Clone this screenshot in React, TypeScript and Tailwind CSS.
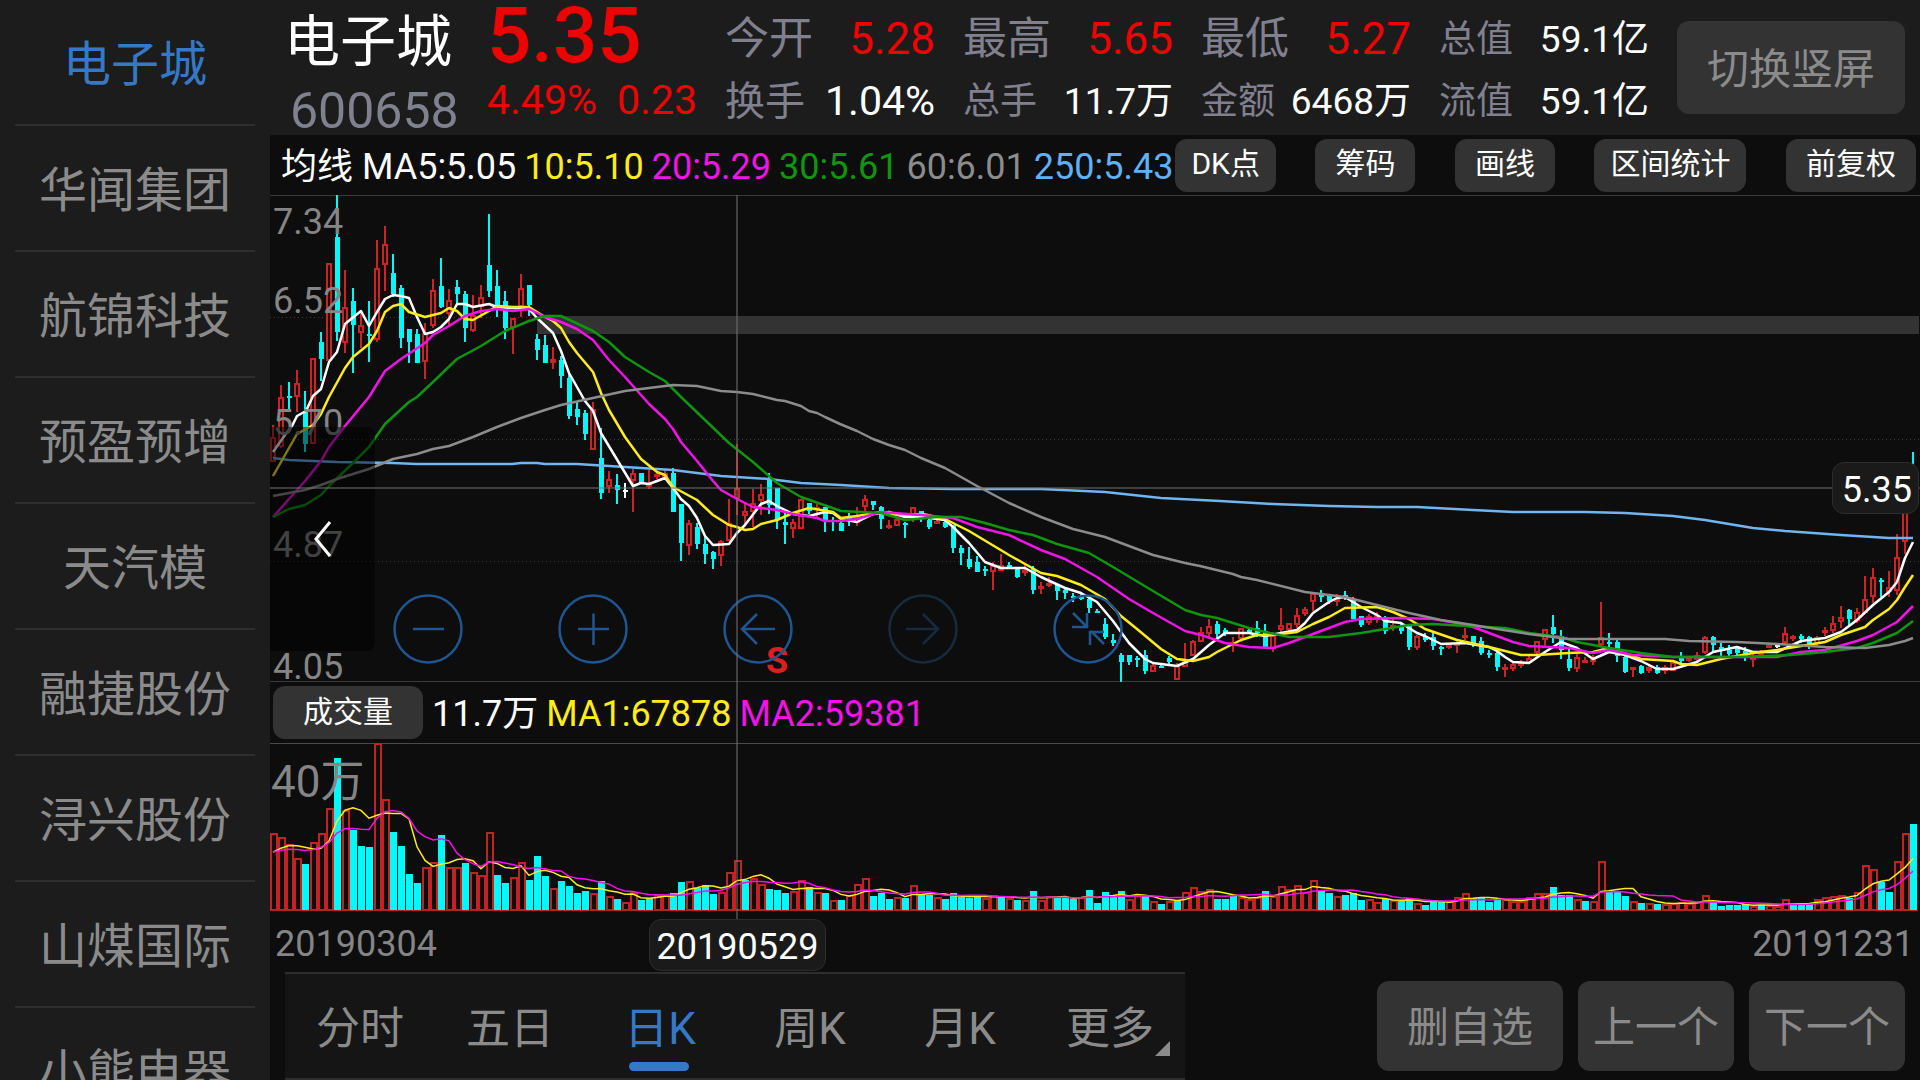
import type { ReactNode } from "react";

type Kind = "R" | "C" | "W";
interface Candle {
  kind: Kind;
  high: number;
  top: number;
  bottom: number;
  low: number;
}

/* One entry per trading day: kind (R rise, C fall, W flat), then high, body top, body bottom, low. */
const CANDLES: Candle[] = `
R425,437,462,462 R385,397,447,448 C382,396,397,410 R370,383,397,412 C391,412,444,452 R358,358,444,444
C332,342,359,381 R263,263,361,361 C195,237,332,341 R270,307,343,353 C288,301,325,373 R313,325,333,348
C301,334,336,362 R240,268,340,342 R226,244,265,291 C254,273,294,297 C285,288,338,348 C329,329,342,363
C329,334,363,363 R323,333,362,379 R279,290,326,328 C258,286,307,308 R289,300,314,327 C280,287,294,305
C291,294,328,342 R295,315,331,332 R285,297,307,318 C214,265,291,297 C270,286,305,317 C291,301,328,339
R318,318,328,354 R274,288,307,317 C285,285,305,316 C334,339,350,360 C335,345,363,363 R347,359,363,369
C356,360,376,388 C373,378,416,419 C402,409,417,425 C410,413,434,440 R402,409,450,450 C428,458,493,499
R471,479,487,493 C474,485,490,504 W483,490,491,498 R469,473,481,512 C473,473,483,483 R470,483,487,489
R473,474,477,479 R470,473,477,480 C468,473,512,512 C504,504,543,561 R520,523,546,555 C523,527,544,549
C537,544,554,564 C551,552,559,569 R540,541,556,566 R499,523,541,541 R444,488,499,515 R503,511,516,525
R489,503,512,527 R484,494,501,515 C473,479,505,514 C488,488,520,529 C513,522,525,544 R519,522,529,538
R499,499,529,529 C503,503,511,514 R504,507,510,518 C507,507,521,532 C517,520,521,531 C520,523,531,531
C513,517,519,526 R507,517,523,526 R495,499,507,513 C501,501,505,510 C506,507,519,529 R520,525,527,529
R517,519,526,526 C522,523,525,538 R507,507,519,522 C511,511,517,522 C518,520,527,529 R519,521,524,524
C521,522,527,528 C525,525,548,553 C545,548,553,565 C547,559,567,569 C556,562,572,572 C566,569,571,576
R562,565,572,590 R554,565,571,571 C562,565,566,568 C568,569,577,578 R563,570,572,576 C566,569,590,594
R582,586,588,594 R577,583,586,587 C585,585,591,600 C588,590,593,599 C593,596,597,602 C593,597,599,600
C597,599,608,613 C609,611,612,613 C618,624,637,639 C634,640,643,646 C653,655,662,682 C655,655,662,665
C656,658,659,667 C650,655,671,674 R663,665,672,672 C665,666,668,668 C656,658,662,665 R663,665,680,680
R643,660,667,667 R640,641,656,656 R627,632,642,642 R619,626,634,637 C621,624,634,638 C628,630,633,636
R637,642,646,652 R628,628,639,642 C629,630,633,634 C621,628,633,637 C624,631,647,647 R632,635,649,652
R608,625,630,633 R623,623,630,633 R608,615,625,628 R607,609,614,616 R592,593,602,611 C590,595,597,602
C595,596,601,604 R594,598,602,606 C591,595,598,600 C597,600,619,619 C616,616,625,627 R614,616,623,625
R612,615,618,623 C616,617,631,634 R617,625,628,631 C622,626,631,634 C626,626,647,650 R635,636,648,650
C633,636,640,642 C633,637,646,650 C646,647,649,655 R643,645,648,649 R641,643,645,653 R628,635,637,640
C636,636,644,647 C637,641,653,655 C650,653,655,658 C650,653,667,671 R664,667,668,677 R663,664,669,671
R660,663,666,668 R656,658,663,664 R641,641,653,655 R629,629,640,647 C615,627,634,643 C630,636,650,659
C647,659,668,671 R654,657,669,672 R657,660,662,663 R655,659,662,665 R602,637,645,647 C633,642,644,648
C640,642,656,662 C655,657,672,673 R667,667,669,677 C665,666,673,674 R666,667,671,673 C665,667,673,674
R665,667,671,674 R660,662,671,671 C652,656,661,663 R657,658,661,662 R652,655,660,663 R636,637,653,654
C636,637,645,652 C643,647,650,656 C645,650,654,656 C647,648,653,655 C647,651,657,661 R652,657,659,667
R650,652,655,657 R644,645,648,648 W643,645,647,648 R627,633,643,645 R635,636,639,641 C634,636,639,643
C636,637,647,649 R636,637,644,647 R627,630,633,636 R616,623,631,633 R606,617,622,628 C609,610,619,625
R608,612,621,623 R576,599,613,613 R568,577,597,603 C578,580,582,597 R571,587,592,597 R534,557,591,595
R500,500,542,554 C452,470,500,504`
  .trim()
  .split(/\s+/)
  .map((entry) => {
    const [high, top, bottom, low] = entry.slice(1).split(",").map(Number);
    return { kind: entry[0] as Kind, high, top, bottom, low };
  });

/* Volume bars: kind and the height of the bar. */
const VOLUMES = `
R77 R73 R66 R52 C46 R68 R77 R102 C152 R100 C80 C64 C63 R167 R111 C78 C64 C36 C27 R43 R48 C75 R43 R43 C47 R38
R35 R78 C35 C27 R33 R48 C30 C54 C34 R22 C29 C24 C17 C19 R17 C29 R14 C11 R8 R18 C10 C12 R15 R15 C17 C28 R29 C22
C25 C16 R18 R38 R50 C30 R32 R26 C21 C20 C17 R19 R30 C23 R18 C17 R10 C10 R15 R26 R32 C14 C17 C11 R13 C12 R25
C16 C15 R13 C11 C17 C13 C12 C14 R12 R15 C13 R12 C10 R10 C19 R10 R14 C12 C12 C11 R13 C20 C7 C18 C15 C19 R11
R15 C14 R9 C6 R9 C10 R18 R23 R19 R21 C11 C11 C14 R13 R11 R13 C19 R14 R24 R21 R25 R18 R30 C19 C17 R14 C15
C17 C10 R11 R8 C11 R10 C9 C12 R7 C5 C10 C8 R9 R13 R17 C12 C12 C8 C10 R11 R9 R9 R13 R17 R17 C23 C15 C15 R11
C9 R9 R49 C18 C18 C14 R9 C7 R7 C6 R6 R7 R8 R7 R8 R15 C8 C4 C5 C5 C6 R4 C5 R5 R4 R11 C5 C6 C6 R11 R13 R14 R15
C12 R18 R45 R41 C28 C18 R49 R77 C86`
  .trim()
  .split(/\s+/)
  .map((entry) => ({ kind: entry[0] as Kind, size: Number(entry.slice(1)) }));

const MA_LINES: { color: string; points: string }[] = [
  {
    color: "#6fb5f2",
    points:
      "273,458 289,460 337,462 393,463 417,464 512,464 521,463 537,463 545,464 577,464 625,467 673,470 721,476 769,479 801,483 841,485 889,488 953,489 1041,489 1105,492 1161,498 1220,501 1273,504 1329,506 1377,507 1417,507 1473,510 1513,512 1585,512 1625,513 1673,516 1705,520 1729,524 1753,528 1785,531 1841,535 1889,538 1913,538",
  },
  {
    color: "#ffffff",
    points:
      "273,452 285,435 292,426 297,416 306,411 313,396 321,389 329,362 337,352 345,324 361,311 369,326 377,312 385,299 393,295 401,296 409,298 417,317 425,334 433,332 441,327 449,319 457,304 465,304 473,307 489,304 497,307 513,308 529,309 537,318 553,333 561,351 569,373 585,401 593,411 601,433 633,486 641,483 649,484 665,478 673,488 681,499 689,506 697,518 705,536 713,545 729,544 737,533 745,525 761,504 769,501 777,506 793,514 809,516 825,512 833,513 841,519 857,522 873,514 889,512 905,517 921,517 945,520 953,527 969,543 985,562 1001,568 1025,568 1041,577 1065,588 1081,593 1097,602 1113,621 1129,643 1145,659 1153,663 1177,666 1193,659 1209,645 1225,633 1249,633 1265,636 1281,633 1297,630 1305,623 1313,613 1329,602 1337,598 1345,597 1361,607 1377,615 1385,621 1401,623 1417,633 1425,636 1441,644 1465,643 1489,647 1497,651 1505,657 1513,662 1529,663 1545,652 1561,642 1577,648 1593,659 1609,652 1625,655 1641,661 1657,669 1673,669 1697,662 1713,652 1737,647 1753,652 1777,652 1801,641 1825,638 1841,632 1857,620 1873,605 1889,592 1897,582 1905,558 1913,542",
  },
  {
    color: "#ffec1a",
    points:
      "273,476 297,434 313,425 321,414 329,397 345,368 353,357 369,344 377,331 385,312 393,306 401,304 409,312 425,317 441,313 449,308 457,311 465,319 473,320 489,311 497,306 513,307 529,307 545,317 553,321 561,328 569,342 577,353 593,372 601,393 609,410 625,437 641,459 657,472 665,475 673,487 697,500 713,515 729,525 737,527 745,530 753,529 761,524 777,520 793,513 809,508 833,512 841,518 857,516 881,512 897,515 923,514 945,519 969,531 1009,555 1041,573 1057,576 1081,585 1105,599 1121,616 1137,629 1161,649 1177,659 1193,661 1209,657 1217,652 1241,640 1257,635 1273,635 1297,632 1313,624 1329,617 1345,608 1377,607 1393,612 1409,619 1425,629 1457,640 1489,647 1521,655 1537,655 1569,653 1593,652 1609,648 1641,659 1673,661 1681,664 1697,665 1721,659 1753,653 1777,650 1801,646 1825,642 1841,635 1865,627 1873,620 1889,609 1897,600 1905,587 1913,575",
  },
  {
    color: "#f014e6",
    points:
      "273,517 305,481 321,461 329,447 345,426 369,397 385,371 401,359 425,343 433,335 449,326 465,316 481,311 497,309 513,311 529,309 545,317 561,322 577,329 593,340 609,360 625,377 649,404 665,419 673,429 681,442 697,461 713,481 721,490 737,499 753,507 777,510 793,514 817,518 825,521 840,521 857,519 881,512 921,515 953,518 977,527 1009,535 1041,550 1065,559 1097,577 1129,599 1153,613 1185,631 1201,635 1225,643 1249,647 1273,648 1289,643 1313,634 1345,622 1361,619 1400,618 1433,619 1457,623 1473,627 1489,633 1513,642 1529,646 1569,648 1593,653 1609,650 1633,655 1673,657 1777,657 1801,652 1825,650 1857,641 1873,635 1897,622 1913,606",
  },
  {
    color: "#0f960f",
    points:
      "273,517 289,509 305,505 321,495 329,486 353,463 369,447 385,424 409,402 417,397 433,382 457,359 481,346 505,331 529,321 545,316 561,316 593,331 609,342 625,357 649,372 665,381 681,397 729,443 753,462 777,483 801,497 841,511 881,513 905,520 937,517 961,517 985,523 1009,530 1033,535 1057,544 1089,553 1113,567 1153,591 1185,610 1201,615 1217,618 1249,628 1265,632 1289,637 1329,637 1361,633 1409,625 1433,624 1467,626 1505,628 1529,633 1561,637 1577,642 1609,648 1641,653 1673,657 1740,657 1790,655 1825,652 1857,648 1873,643 1897,633 1913,621",
  },
  {
    color: "#8c8c8c",
    points:
      "273,496 289,493 305,490 321,485 337,479 369,469 393,459 417,454 433,449 449,446 473,437 497,427 521,418 545,410 561,405 593,398 625,391 673,385 697,386 721,391 737,392 753,394 777,400 785,401 801,406 809,411 817,413 825,417 840,424 857,431 873,439 889,445 905,450 921,458 945,468 977,486 1009,503 1041,517 1073,529 1105,537 1153,555 1185,563 1200,566 1233,574 1241,577 1257,580 1305,592 1345,597 1377,605 1409,613 1441,620 1473,625 1497,629 1529,634 1569,639 1601,639 1665,639 1689,641 1737,642 1777,644 1825,647 1865,648 1889,645 1905,641 1913,638",
  },
];

const COLORS: Record<Kind, string> = { R: "#cf2323", C: "#00fafa", W: "#ffffff" };
const STEP = 8;
const FIRST_X = 273;

const dayX = (i: number) => FIRST_X + i * STEP;

function averageLine(days: number, before: number) {
  const sizes = [...Array<number>(days - 1).fill(before), ...VOLUMES.map((v) => v.size)];
  return VOLUMES.map((_, i) => {
    const sum = sizes.slice(i, i + days).reduce((a, b) => a + b, 0);
    return `${dayX(i)},${910 - sum / days}`;
  }).join(" ");
}

const STOCKS = ["电子城", "华闻集团", "航锦科技", "预盈预增", "天汽模", "融捷股份", "浔兴股份", "山煤国际", "小熊电器"];

const STATS = [
  { label: "今开", value: "5.28", big: true, red: true },
  { label: "最高", value: "5.65", big: true, red: true },
  { label: "最低", value: "5.27", big: true, red: true },
  { label: "总值", value: "59.1亿" },
  { label: "换手", value: "1.04%", mid: true },
  { label: "总手", value: "11.7万" },
  { label: "金额", value: "6468万" },
  { label: "流值", value: "59.1亿" },
];

const TABS = ["分时", "五日", "日K", "周K", "月K", "更多"];

function Sidebar() {
  return (
    <nav className="w-[270px] shrink-0 overflow-hidden bg-[#1c1c1c] px-[15px]">
      <ul>
        {STOCKS.map((name, i) => (
          <li key={name} className="border-b-2 border-[#2e2e2e]">
            <button
              className={`h-[124px] w-full whitespace-nowrap pt-1.5 text-[48px] leading-none ${
                i === 0 ? "text-[#3579c6]" : "text-[#8b8b8b]"
              }`}
            >
              {name}
            </button>
          </li>
        ))}
      </ul>
    </nav>
  );
}

function Header() {
  return (
    <header className="flex h-[135px] bg-[#1c1c1c] pr-[15px]">
      <div className="w-[217px] pl-[14px] pt-[14px]">
        <h1 className="text-[56px] leading-[56px] text-white">电子城</h1>
        <div className="pl-1.5 pt-4 text-[50px] leading-[50px] text-[#80808f]">600658</div>
      </div>
      <div className="w-[238px] text-[#ee0202]">
        <div className="text-[78px] font-medium leading-[72px]">5.35</div>
        <div className="flex justify-between pr-7 pt-2 text-[41px] leading-[41px]">
          <span>4.49%</span>
          <span>0.23</span>
        </div>
      </div>
      <dl className="grid flex-1 grid-cols-4 grid-rows-2 gap-x-7 pb-0.5 pt-2">
        {STATS.map((s) => (
          <div key={s.label} className="flex items-center justify-between whitespace-nowrap leading-none">
            <dt className={`text-[#80808f] ${s.big ? "text-[44px]" : s.mid ? "text-[40px]" : "text-[37px]"}`}>
              {s.label}
            </dt>
            <dd
              className={`${s.red ? "text-[#ee0202]" : "text-white"} ${
                s.big ? "text-[44px]" : s.mid ? "text-[41px]" : "text-[37px]"
              }`}
            >
              {s.value}
            </dd>
          </div>
        ))}
      </dl>
      <button className="ml-7 mt-[21px] h-[93px] w-[228px] shrink-0 rounded-xl bg-[#333] pt-1 text-[42px] leading-none text-[#8b8b8b]">
        切换竖屏
      </button>
    </header>
  );
}

type ButtonSize = "narrow" | "normal" | "wide";

const BUTTON_SIZES: Record<ButtonSize, string> = {
  narrow: "px-4",
  normal: "px-5",
  wide: "w-[150px]",
};

function ToolButton({ children, size = "normal" }: { children: ReactNode; size?: ButtonSize }) {
  return (
    <button
      className={`h-[53px] shrink-0 whitespace-nowrap rounded-xl bg-[#333] pb-0.5 text-[30px] leading-none text-white ${BUTTON_SIZES[size]}`}
    >
      {children}
    </button>
  );
}

function AverageBar() {
  return (
    <div className="flex h-[60px] items-center pl-[11px] pr-1">
      <div className="flex gap-2 whitespace-nowrap pt-1 text-[36px] leading-none">
        <span className="text-white">均线 MA5:5.05</span>
        <span className="text-[#ffec1a]">10:5.10</span>
        <span className="text-[#f014e6]">20:5.29</span>
        <span className="text-[#0f960f]">30:5.61</span>
        <span className="text-[#8c8c8c]">60:6.01</span>
        <span className="text-[#5fb0f5]">250:5.43</span>
      </div>
      <div className="flex flex-1 justify-between pl-0.5">
        <ToolButton size="narrow">DK点</ToolButton>
        <ToolButton>筹码</ToolButton>
        <ToolButton>画线</ToolButton>
        <ToolButton size="narrow">区间统计</ToolButton>
        <ToolButton>前复权</ToolButton>
      </div>
    </div>
  );
}

function PriceChart() {
  return (
    <svg className="block h-[487px] w-full" viewBox="270 195 1650 487" preserveAspectRatio="none" aria-label="日K">
      <g stroke="#3c3c3c" strokeWidth="1" strokeDasharray="1 3">
        <path d="M270 317.500H1920M270 439.500H1920M270 561.500H1920" />
      </g>
      <path d="M270 195.500H1920M270 681.500H1920" stroke="#3a3a3a" strokeWidth="1" />
      <rect x="537" y="316" width="1382" height="18" fill="#333" />
      <g shapeRendering="crispEdges">
        {CANDLES.map((c, i) => {
          const x = dayX(i);
          const color = COLORS[c.kind];
          return (
            <g key={i}>
              <path d={`M${x} ${c.high}V${c.top}M${x} ${c.bottom}V${c.low}`} stroke={color} strokeWidth="2" />
              {c.kind === "R" ? (
                <rect
                  x={x - 2}
                  y={c.top + 1}
                  width="4"
                  height={Math.max(1, c.bottom - c.top - 2)}
                  fill="none"
                  stroke={color}
                  strokeWidth="2"
                />
              ) : (
                <rect x={x - 2} y={c.top} width="5" height={Math.max(2, c.bottom - c.top)} fill={color} />
              )}
            </g>
          );
        })}
      </g>
      {MA_LINES.map((line) => (
        <polyline
          key={line.color}
          points={line.points}
          fill="none"
          stroke={line.color}
          strokeWidth="2.500"
          strokeLinejoin="round"
        />
      ))}
    </svg>
  );
}

function VolumeChart() {
  return (
    <svg className="block h-[169px] w-full" viewBox="270 743 1650 169" preserveAspectRatio="none" aria-label="成交量">
      <path d="M270 743.500H1920" stroke="#4a4a4a" strokeWidth="1" />
      <g shapeRendering="crispEdges">
        {VOLUMES.map((v, i) => {
          const x = dayX(i) - 3;
          return v.kind === "R" ? (
            <rect
              key={i}
              x={x + 1}
              y={911 - v.size}
              width="6"
              height={v.size - 1}
              fill="none"
              stroke="#c42222"
              strokeWidth="2"
            />
          ) : (
            <rect key={i} x={x} y={910 - v.size} width="7" height={v.size} fill="#00fafa" />
          );
        })}
        <path d="M270 910.500H1918" stroke="#b02424" strokeWidth="1" />
      </g>
      <polyline points={averageLine(5, 53)} fill="none" stroke="#ffec1a" strokeWidth="1.500" />
      <polyline points={averageLine(10, 56)} fill="none" stroke="#f014e6" strokeWidth="1.500" />
    </svg>
  );
}

function RoundButton({ label, dim, children }: { label: string; dim?: boolean; children: ReactNode }) {
  return (
    <button aria-label={label} className={dim ? "size-[70px] text-[#182b3e]" : "size-[70px] text-[#1f5590]"}>
      <svg viewBox="0 0 70 70" fill="none" stroke="currentColor" strokeWidth="2.500">
        <circle cx="35" cy="35" r="33.500" />
        {children}
      </svg>
    </button>
  );
}

function ChartControls() {
  return (
    <div className="absolute left-[123px] top-[399px] flex gap-[95px]">
      <RoundButton label="缩小">
        <path d="M20 35H51" />
      </RoundButton>
      <RoundButton label="放大">
        <path d="M20 35H51M35.500 19.500V51" />
      </RoundButton>
      <RoundButton label="左移">
        <path d="M52 35H19M34 20L19 35L34 50" />
      </RoundButton>
      <RoundButton label="右移" dim>
        <path d="M18 35H50M35 20L50 35L35 50" />
      </RoundButton>
      <RoundButton label="收起">
        <path d="M20 19L33 32M34 19V33H19M51 50L38 37M37 51V38H51" />
      </RoundButton>
    </div>
  );
}

function Charts() {
  return (
    <section className="relative">
      <PriceChart />
      <div className="flex h-[61px] items-center gap-[9px] whitespace-nowrap pl-[3px] text-[36px] leading-none">
        <ToolButton size="wide">成交量</ToolButton>
        <div className="flex gap-2 pt-0.5">
          <span className="text-white">11.7万</span>
          <span className="text-[#ffec1a]">MA1:67878</span>
          <span className="text-[#f014e6]">MA2:59381</span>
        </div>
      </div>
      <VolumeChart />

      <div className="absolute left-[3px] top-0 text-[36px] leading-none text-[#858585]">
        <div className="absolute top-[9px]">7.34</div>
        <div className="absolute top-[88px]">6.52</div>
        <div className="absolute top-[210px]">5.70</div>
        <div className="absolute top-[332px]">4.87</div>
        <div className="absolute top-[454px]">4.05</div>
      </div>
      <div className="absolute left-[1px] top-[565px] text-[44px] leading-none text-[#858585]">40万</div>

      <button
        aria-label="展开"
        className="absolute left-0 top-[232px] flex h-[224px] w-[105px] items-center justify-center rounded-r-lg bg-black/50"
      >
        <svg className="h-[36px] w-[18px]" viewBox="0 0 18 36" fill="none" stroke="#fff" strokeWidth="3">
          <path d="M16 1L2 18L16 35" />
        </svg>
      </button>

      <div className="absolute left-[496px] top-[448px] text-[36px] font-bold leading-none text-[#d82020]">S</div>
      <ChartControls />

      <div className="absolute left-0 top-[292px] h-[2px] w-full bg-[#737373]/50" />
      <div className="absolute left-[466px] top-0 h-[724px] w-[2px] bg-[#737373]/50" />
      <div className="absolute right-[1px] top-[267px] flex h-[52px] w-[87px] items-center justify-end rounded-xl border border-[#2d2d2d] bg-[#1a1a1a] pr-1.5 pt-1 text-[36px] leading-none text-white">
        5.35
      </div>
      <div className="absolute left-[379px] top-[724px] flex h-[52px] w-[177px] items-center justify-center rounded-xl border border-[#2d2d2d] bg-[#1a1a1a] pt-1 text-[36px] leading-none text-white">
        20190529
      </div>
    </section>
  );
}

function Footer() {
  return (
    <footer className="flex flex-1 items-stretch justify-between pl-[15px] pr-[15px]">
      <div className="grid w-[900px] grid-cols-6 border-y-2 border-[#2e2e2e] bg-[#151515]">
        {TABS.map((tab) => {
          const active = tab === "日K";
          return (
            <button
              key={tab}
              className={`relative pt-1.5 text-[44px] leading-none ${active ? "text-[#3579c6]" : "text-[#8b8b8b]"}`}
            >
              {tab}
              {active && (
                <span className="absolute bottom-[7px] left-[44px] h-[9px] w-[60px] rounded-full bg-[#3579c6]" />
              )}
              {tab === "更多" && (
                <svg className="absolute bottom-[22px] right-[15px] size-[15px]" viewBox="0 0 15 15">
                  <path d="M15 0V15H0Z" fill="#8b8b8b" />
                </svg>
              )}
            </button>
          );
        })}
      </div>
      <div className="flex gap-[15px] py-[9px] text-[42px] leading-none text-[#8b8b8b]">
        <button className="w-[186px] rounded-xl bg-[#333] pt-1">删自选</button>
        <button className="w-[156px] rounded-xl bg-[#333] pt-1">上一个</button>
        <button className="w-[156px] rounded-xl bg-[#333] pt-1">下一个</button>
      </div>
    </footer>
  );
}

export default function App() {
  return (
    <div className="flex h-screen overflow-hidden bg-[#0d0d0d] font-['Roboto','Noto_Sans_CJK_SC',sans-serif]">
      <Sidebar />
      <main className="flex min-w-0 flex-1 flex-col">
        <Header />
        <AverageBar />
        <Charts />
        <div className="flex h-[60px] items-center justify-between pl-[5px] pr-[6px] pt-1 text-[36px] leading-none text-[#858585]">
          <time>20190304</time>
          <time>20191231</time>
        </div>
        <Footer />
      </main>
    </div>
  );
}
